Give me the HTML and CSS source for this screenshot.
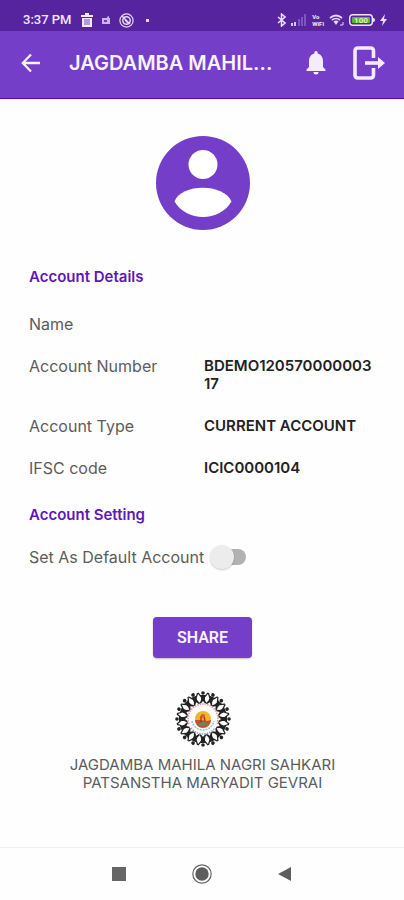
FILE: index.html
```html
<!DOCTYPE html>
<html lang="en">

<head>
    <meta charset="UTF-8">
    <title>Account Details</title>
    <meta name="viewport" content="width=device-width, initial-scale=1.0">
    <link rel="stylesheet" href="styles.css">
</head>

<body>
    <div class="status-bar">
        <div class="status-left">
            <span>3:37 PM</span>
            <svg width="12" height="14" viewBox="0 0 12 14">
                <path d="M0 2h4V0h4v2h4v2H0zM1 5h10v9H1z" fill="#f2e9ff" />
                <path d="M4 6v6M6 6v6M8 6v6" stroke="#5724a0" stroke-width="0.8" />
            </svg>
            <svg width="8" height="8" viewBox="0 0 8 8">
                <path d="M0 2h5V1l2-1v2h1v6H0z" fill="#cbb6ea" />
                <path d="M2 4h3v2H2z" fill="#6c3fae" />
            </svg>
            <svg width="15" height="15" viewBox="0 0 15 15" fill="none" stroke="#e6daf8">
                <circle cx="7.500" cy="7.500" r="6.600" stroke-width="1.200" />
                <circle cx="7.500" cy="7.500" r="3.700" stroke-width="1.500" />
                <path d="M3 3l8 8M6 7l3 3" stroke-width="1.400" />
            </svg>
            <span class="dot"></span>
        </div>
        <div class="status-right">
            <svg width="9" height="14" viewBox="0 0 9 14">
                <path d="M1 4l7 6-3.500 3V1L8 4l-7 6" fill="none" stroke="#eadfff" stroke-width="1.500" />
            </svg>
            <svg width="16" height="12" viewBox="0 0 16 12">
                <path d="M0 9h2v3H0zM3 8h2v4H3z" fill="#d8c8f2" />
                <path d="M7 5h2v7H7zM10 3h2v9h-2zM13 0h2v12h-2z" fill="#7d55bb" />
            </svg>
            <div class="vowifi">
                <span>Vo</span>
                <span>WiFi</span>
            </div>
            <svg width="15" height="12" viewBox="0 0 15 12" fill="none" stroke="#e6daf8">
                <path d="M1 4q6-5 12 0M3 6q4-3 8 0" stroke-width="1.700" />
                <path d="M4.500 7.500q2.500-2 5 0L7 11z" fill="#e6daf8" stroke="none" />
                <path d="M11 11h3V8" stroke-width="1" />
            </svg>
            <svg width="26" height="12" viewBox="0 0 26 12">
                <rect x="0.700" y="0.700" width="22.600" height="10.600" rx="3" fill="#5724a0" stroke="#eee6fb"
                    stroke-width="1.400" />
                <rect x="3" y="3" width="18" height="6" rx="1" fill="#58b62e" />
                <path d="M24 4q2 0 2 2t-2 2z" fill="#eee6fb" />
                <text x="12" y="9" class="battery-text">100</text>
            </svg>
            <svg width="7" height="12" viewBox="0 0 7 12">
                <path d="M5 0L0 7h3l-1 5 5-7H4z" fill="#eadfff" />
            </svg>
        </div>
    </div>

    <header class="app-bar">
        <button class="icon-btn" aria-label="Back">
            <svg width="20" height="20" viewBox="0 0 20 20" fill="none" stroke="#f8f2ff" stroke-width="2.300">
                <path d="M19 10H2M10 1.500L1.800 10l8.200 8.500" />
            </svg>
        </button>
        <h1>JAGDAMBA MAHIL...</h1>
        <button class="icon-btn" aria-label="Notifications">
            <svg width="20" height="24" viewBox="0 0 20 24" fill="#f5ebff">
                <path
                    d="M8.300 2.500V1.800a1.700 1.700 0 0 1 3.400 0v.7C15 3.300 17 6.300 17 10v6l2.500 2.500V20H.5v-1.500L3 16v-6c0-3.700 2-6.700 5.300-7.500zM7.500 21h5a2.500 2.500 0 0 1-5 0z" />
            </svg>
        </button>
        <button class="icon-btn" aria-label="Log out">
            <svg width="32" height="34" viewBox="0 0 32 34" fill="none" stroke="#f5ebff" stroke-width="3.600">
                <path d="M20.500 12V5q0-3-3-3H5Q2 2 2 5v24q0 3 3 3h12.500q3 0 3-3v-7" />
                <path d="M12 17h16" />
                <path d="M25 11l7 6-7 6z" fill="#f5ebff" stroke="none" />
            </svg>
        </button>
    </header>

    <main>
        <svg class="avatar" width="94" height="94" viewBox="0 0 94 94">
            <circle cx="47" cy="47" r="47" fill="#743ec8" />
            <circle cx="47" cy="28.500" r="14.500" fill="#fff" />
            <path d="M18.500 65.500C25 47 68 47 75.500 65.500C64 86 30 86 18.500 65.500z" fill="#fff" />
        </svg>

        <h2>Account Details</h2>
        <dl class="details">
            <div class="row">
                <dt>Name</dt>
                <dd></dd>
            </div>
            <div class="row">
                <dt>Account Number</dt>
                <dd>BDEMO120570000003<wbr>17</dd>
            </div>
            <div class="row">
                <dt>Account Type</dt>
                <dd>CURRENT ACCOUNT</dd>
            </div>
            <div class="row">
                <dt>IFSC code</dt>
                <dd>ICIC0000104</dd>
            </div>
        </dl>

        <h2>Account Setting</h2>
        <div class="setting">
            <label for="default-account">Set As Default Account</label>
            <input type="checkbox" id="default-account" class="switch">
        </div>

        <button class="share-btn">SHARE</button>

        <div class="bank">
            <svg width="58" height="58" viewBox="-29 -29 58 58">
                <defs>
                    <g id="person">
                        <circle cx="0" cy="-26" r="1.800" />
                        <path
                            d="M-4.500-26.500l2 2.500h5l2-2.500 1 .8L2-21.500V-19l1.500 3.500H2L0-18l-2 2.500h-1.500L-2-19v-2.500L-5.500-25.700z" />
                    </g>
                    <g id="people">
                        <use href="#person" />
                        <use href="#person" transform="rotate(22.500)" />
                        <use href="#person" transform="rotate(45)" />
                        <use href="#person" transform="rotate(67.500)" />
                    </g>
                </defs>
                <g fill="#222">
                    <use href="#people" />
                    <use href="#people" transform="rotate(90)" />
                    <use href="#people" transform="rotate(180)" />
                    <use href="#people" transform="rotate(270)" />
                </g>
                <g fill="none" stroke-width="1.500">
                    <path d="M-14 5A14.900 14.900 0 1 1 14 5" stroke="#e9929b" stroke-dasharray="1.500 1" />
                    <path d="M-12 9A15 15 0 0 0 12 9" stroke="#9a9cb0" stroke-dasharray="1.500 1" />
                    <path d="M-11 2A11.200 11.200 0 0 0 11 2" stroke="#93cbb5" stroke-dasharray="2 1" />
                </g>
                <circle r="8" fill="#f3b428" />
                <path d="M-8 1a8 8 0 0 0 16 0L4 2-2 1z" fill="#cf4937" />
                <path d="M-2 4v-6q1-3 3-1l1 5" fill="none" stroke="#a8382c" stroke-width="1.500" />
                <path d="M-5 5q5-4 10 0-5 4-10 0z" fill="#4e9452" />
                <circle cx="0" cy="-3" r="2" fill="#d8602f" />
            </svg>
            <p>JAGDAMBA MAHILA NAGRI SAHKARI<br>PATSANSTHA MARYADIT GEVRAI</p>
        </div>
    </main>

    <nav class="nav-bar">
        <button class="icon-btn" aria-label="Recent apps">
            <svg width="20" height="20" viewBox="0 0 20 20">
                <path d="M3 3h14v14H3z" fill="#666" />
            </svg>
        </button>
        <button class="icon-btn" aria-label="Home">
            <svg width="20" height="20" viewBox="0 0 20 20">
                <circle cx="10" cy="10" r="9.200" fill="none" stroke="#666" stroke-width="1.200" />
                <circle cx="10" cy="10" r="6.700" fill="#5e5e5e" />
            </svg>
        </button>
        <button class="icon-btn" aria-label="Back to previous screen">
            <svg width="20" height="20" viewBox="0 0 20 20">
                <path d="M16 3v14L3 10z" fill="#5e5e5e" />
            </svg>
        </button>
    </nav>
</body>

</html>
```
FILE: styles.css
```css
* {
    box-sizing: border-box;
    padding: 0;
    margin: 0;
}

body {
    display: flex;
    flex-direction: column;
    min-height: 100vh;
    background-color: #fefefe;
    font-family: Inter, "Liberation Sans", sans-serif;
    font-size: 16px;
    line-height: 18px;
    color: #5c5c5c;
}

button {
    border: 0;
    background: none;
    cursor: pointer;
}

svg {
    display: block;
    flex-shrink: 0;
}

.status-bar {
    display: flex;
    justify-content: space-between;
    align-items: center;
    padding: 9px 17px 0 23px;
    height: 31px;
    background-color: #5724a0;
    color: #f2e9ff;
    font-family: Roboto, sans-serif;
    font-size: 13px;
    font-weight: 500;
}

.status-left {
    display: flex;
    align-items: center;
    gap: 9px;
}

.status-right {
    display: flex;
    align-items: center;
    gap: 5px;
}

.dot {
    width: 3px;
    height: 3px;
    margin-left: 3px;
    background-color: #e6daf8;
}

.vowifi {
    display: flex;
    flex-direction: column;
    font-size: 6px;
    line-height: 7px;
    font-weight: 700;
}

.battery-text {
    font-size: 8px;
    font-weight: 700;
    fill: #d9f5c8;
    text-anchor: middle;
}

.app-bar {
    display: flex;
    align-items: center;
    padding: 0 19px 4px 21px;
    height: 68px;
    background-color: #743ec8;
    border-bottom: 1px solid #5b0bb5;
}

.app-bar h1 {
    flex: 1;
    padding-left: 28px;
    font-size: 20px;
    line-height: 24px;
    font-weight: 600;
    color: #f8f2ff;
    white-space: nowrap;
}

.app-bar .icon-btn + .icon-btn {
    margin-left: 27px;
}

main {
    flex: 1;
    display: flex;
    flex-direction: column;
    padding: 37px 28px 24px 29px;
}

.avatar {
    align-self: center;
    margin-bottom: 38px;
}

h2 {
    font-size: 15px;
    line-height: 18px;
    font-weight: 600;
    color: #5e17b8;
}

.details {
    display: flex;
    flex-direction: column;
    gap: 24px;
    padding: 29px 0;
}

.row {
    display: flex;
}

.row dt {
    flex: 1;
}

.row dd {
    flex: 1;
    padding-left: 3px;
    font-size: 15px;
    font-weight: 600;
    color: #222;
}

.setting {
    display: flex;
    align-items: center;
    gap: 6px;
    padding-top: 21px;
}

.switch {
    appearance: none;
    position: relative;
    width: 36px;
    height: 24px;
    cursor: pointer;
}

.switch::before {
    content: "";
    position: absolute;
    top: 4px;
    left: 4px;
    right: 0;
    height: 16px;
    border-radius: 8px;
    background-color: #b2b2b2;
}

.switch::after {
    content: "";
    position: absolute;
    top: 0;
    left: 0;
    width: 24px;
    height: 24px;
    border-radius: 50%;
    background-color: #ececec;
    box-shadow: 0 1px 2px rgba(0, 0, 0, 0.2);
}

.switch:checked::after {
    left: 12px;
    background-color: #743ec8;
}

.share-btn {
    align-self: center;
    margin: 48px 0 32px;
    padding: 12px 24px;
    border-radius: 4px;
    background-color: #743ec8;
    box-shadow: 0 1px 2px rgba(0, 0, 0, 0.25);
    font-family: Roboto, sans-serif;
    font-size: 16px;
    line-height: 17px;
    font-weight: 600;
    color: #f8f2ff;
}

.bank {
    display: flex;
    flex-direction: column;
    align-items: center;
    gap: 8px;
    font-size: 15px;
    text-align: center;
}

.nav-bar {
    display: flex;
    justify-content: center;
    align-items: center;
    gap: 63px;
    height: 53px;
    border-top: 1px solid #f1f1f1;
}
```
